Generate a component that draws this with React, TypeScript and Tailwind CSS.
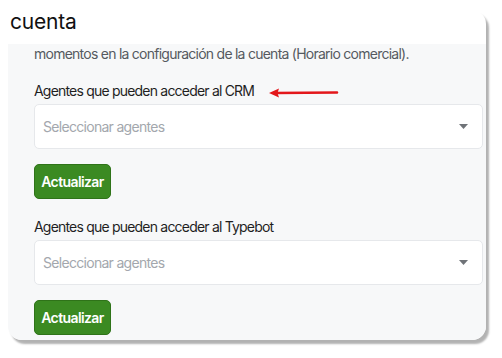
import { useState } from "react";

const font = { fontFamily: "Inter, 'Noto Sans', sans-serif" };

function AgentSelect({ label }: { label: string }) {
  const [value] = useState("");
  return (
    <div className="flex flex-col">
      <label className="text-[14px] leading-[20px] text-[#1f1f1f] tracking-[-0.8px]">
        {label}
      </label>
      <div className="mt-[3px] h-[45px] flex items-center justify-between bg-white border border-[#e6e8eb] rounded-[5px] pl-[8px] pr-[14px]">
        <span className="text-[14px] text-[#a3a7ad] tracking-[-0.7px]">
          {value || "Seleccionar agentes"}
        </span>
        <svg width="9" height="5" viewBox="0 0 9 5">
          <path d="M0 0 L9 0 L4.5 5 Z" fill="#6f7378" />
        </svg>
      </div>
      <button className="mt-[15px] self-start h-[35px] w-[77px] rounded-[5px] bg-[#3b8a22] border border-[#2f7319] text-white text-[14px] font-semibold tracking-[-0.6px]">
        Actualizar
      </button>
    </div>
  );
}

export default function App() {
  return (
    <div className="w-[502px] h-[358px] bg-white pt-[10px] pl-[8px]" style={font}>
      <div className="relative w-[478px] h-[330px] rounded-[14px] bg-white shadow-[3px_4px_2px_rgba(0,0,0,0.3)] flex flex-col">
        {/* cabecera recortada */}
        <div className="h-[34px] pl-[2px] shrink-0 rounded-t-[14px]">
          <h2 className="mt-[1px] text-[21px] leading-[22px] text-[#111] tracking-[-0.2px]">
            cuenta
          </h2>
        </div>

        {/* contenido */}
        <div className="flex-1 bg-[#f7f8f9] pl-[26px] pr-[3px] rounded-b-[14px]">
          <p className="text-[14px] leading-[20px] text-[#555a60] tracking-[-0.75px]">
            momentos en la configuración de la cuenta (Horario comercial).
          </p>

          <div className="mt-[17px]">
            <AgentSelect label="Agentes que pueden acceder al CRM" />
          </div>

          <div className="mt-[18px]">
            <AgentSelect label="Agentes que pueden acceder al Typebot" />
          </div>
        </div>

        {/* flecha roja */}
        <svg
          className="absolute left-[261px] top-[78px]"
          width="70"
          height="10"
          viewBox="0 0 70 10"
        >
          <line x1="6" y1="5" x2="68" y2="4.5" stroke="#e3171b" strokeWidth="2.6" strokeLinecap="round" />
          <path d="M0 5 L10 0.5 L8.5 5 L10 9.5 Z" fill="#e3171b" />
        </svg>
      </div>
    </div>
  );
}
